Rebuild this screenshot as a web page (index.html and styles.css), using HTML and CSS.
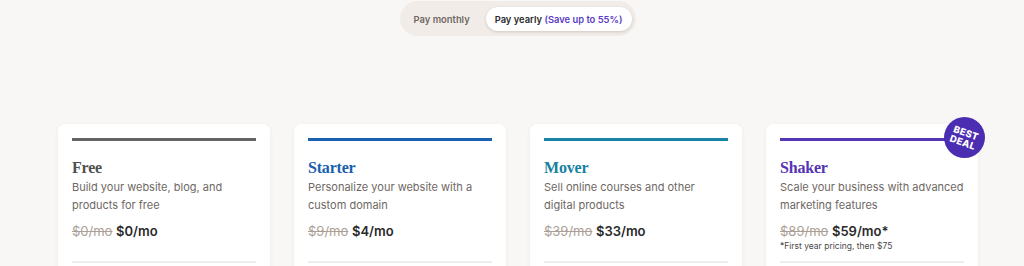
FILE: index.html
```html
<!DOCTYPE html>
<html lang="en">
<head>
<meta charset="utf-8">
<title>Plans</title>
<link rel="stylesheet" href="styles.css">
</head>
<body>
<main class="page">
  <div class="toggle-row">
    <div class="toggle">
      <button class="toggle-btn">Pay monthly</button>
      <button class="toggle-btn active">Pay yearly <span class="save">(Save up to 55%)</span></button>
    </div>
  </div>
  <div class="cards">
    <section class="card free">
      <div class="bar"></div>
      <h2 class="title">Free</h2>
      <p class="desc">Build your website, blog, and products for free</p>
      <div class="price"><s class="old">$0/mo</s> <strong class="new">$0/mo</strong></div>
      <div class="note"></div>
      <hr class="divider">
    </section>
    <section class="card starter">
      <div class="bar"></div>
      <h2 class="title">Starter</h2>
      <p class="desc">Personalize your website with a custom domain</p>
      <div class="price"><s class="old">$9/mo</s> <strong class="new">$4/mo</strong></div>
      <div class="note"></div>
      <hr class="divider">
    </section>
    <section class="card mover">
      <div class="bar"></div>
      <h2 class="title">Mover</h2>
      <p class="desc">Sell online courses and other digital products</p>
      <div class="price"><s class="old">$39/mo</s> <strong class="new">$33/mo</strong></div>
      <div class="note"></div>
      <hr class="divider">
    </section>
    <section class="card shaker">
      <div class="badge"><span>BEST<br>DEAL</span></div>
      <div class="bar"></div>
      <h2 class="title">Shaker</h2>
      <p class="desc">Scale your business with advanced marketing features</p>
      <div class="price"><s class="old">$89/mo</s> <strong class="new">$59/mo*</strong></div>
      <div class="note">*First year pricing, then $75</div>
      <hr class="divider">
    </section>
  </div>
</main>
</body>
</html>
```

FILE: styles.css
```css
* { box-sizing: border-box; }
html, body { margin: 0; padding: 0; }
body {
  background: #f9f7f5;
  font-family: Inter, "Noto Sans", sans-serif;
  color: #2b2b2b;
  height: 266px;
  overflow: hidden;
}
.page {
  width: 920px;
  margin-left: 58px;
}
.toggle-row {
  display: flex;
  justify-content: center;
  padding-top: 1px;
}
.toggle {
  display: flex;
  align-items: center;
  gap: 8px;
  background: #f1ece8;
  border-radius: 18px;
  padding: 6px 4px 5px 6px;
}
.toggle-btn {
  font-family: Inter, sans-serif;
  font-size: 9.4px;
  font-weight: 600;
  height: 24px;
  border: 0;
  background: transparent;
  color: #6f6862;
  padding: 0 8px;
  border-radius: 12px;
  cursor: pointer;
}
.toggle-btn.active {
  background: #ffffff;
  color: #2b2b2b;
  padding: 0 10px 0 9px;
  box-shadow: 0 1px 3px rgba(60, 40, 20, 0.18);
}
.save { color: #5b3cc4; }
.cards {
  display: grid;
  grid-template-columns: repeat(4, 212px);
  gap: 24px;
  margin-top: 88px;
}
.card {
  position: relative;
  background: #ffffff;
  border-radius: 7px;
  box-shadow: 0 1px 4px rgba(80, 60, 40, 0.07);
  padding: 14px 14px 20px 14px;
  height: 170px;
}
.bar {
  height: 3px;
  background: #646464;
}
.starter .bar { background: #1a60b3; }
.mover .bar { background: #1984a6; }
.shaker .bar { background: #5435b6; }
.title {
  margin: 17px 0 0;
  font-family: "Liberation Serif", serif;
  font-weight: 700;
  font-size: 16px;
  line-height: 20px;
  letter-spacing: -0.2px;
  color: #505050;
}
.starter .title { color: #1a5fae; }
.mover .title { color: #16809f; }
.shaker .title { color: #5534b4; }
.desc {
  margin: 0;
  font-size: 11px;
  line-height: 18px;
  color: #6e6864;
}
.price {
  margin-top: 8px;
  font-size: 13px;
  line-height: 18px;
}
.old {
  color: #ab9f98;
  font-weight: 400;
}
.new {
  color: #2a2a2a;
  font-weight: 600;
}
.note {
  height: 12px;
  font-size: 8.5px;
  line-height: 12px;
  color: #4a4a4a;
}
.divider {
  margin: 9px 0 0;
  border: 0;
  height: 2px;
  background: #f0eeec;
}
.badge {
  position: absolute;
  top: -7px;
  right: -7px;
  width: 41px;
  height: 41px;
  border-radius: 50%;
  background: #4b2db2;
  display: flex;
  align-items: center;
  justify-content: center;
}
.badge span {
  transform: rotate(20deg);
  color: #ffffff;
  font-size: 9.5px;
  font-weight: 800;
  line-height: 10px;
  text-align: center;
  letter-spacing: 0.3px;
}
```
